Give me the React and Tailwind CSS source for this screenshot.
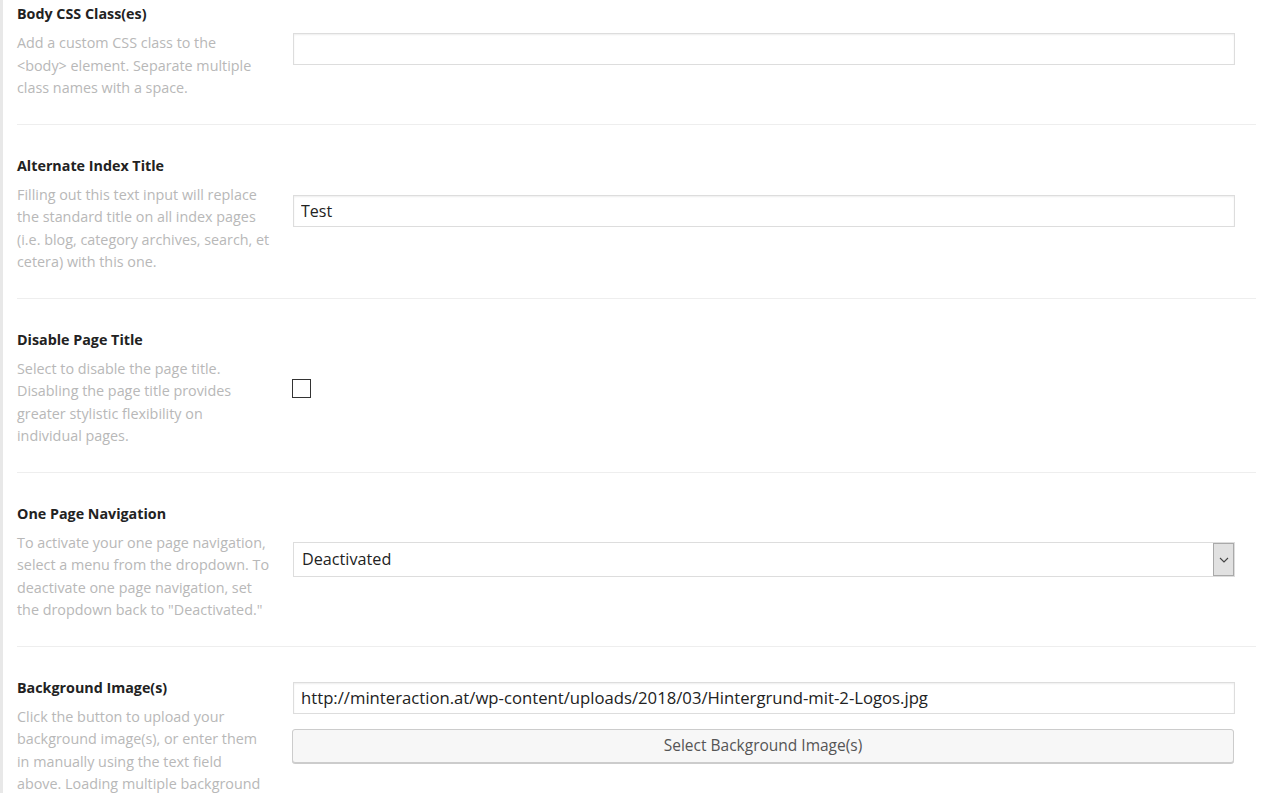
import { useState } from 'react';

const font = "font-['Open_Sans','Noto_Sans',sans-serif]";

function Row({ title, lines, first, children, top }) {
  return (
    <div className={`flex border-b border-[#eeeeee] ${first ? 'pt-[4px]' : 'pt-[31px]'} pb-[24px] ${top ? 'items-start' : 'items-center'}`}>
      <div className="w-[276px] shrink-0">
        <div className="text-[14.3px] leading-[20px] font-bold text-[#222]">{title}</div>
        <div className="mt-2 text-[14.35px] leading-[22.5px] text-[#b8b8b8]">
          {lines.map(l => (
            <div key={l} className="whitespace-nowrap">{l}</div>
          ))}
        </div>
      </div>
      <div className="flex-1 pr-[21px]">{children}</div>
    </div>
  );
}

export default function App() {
  const [css, setCss] = useState('');
  const [indexTitle, setIndexTitle] = useState('Test');
  const [disableTitle, setDisableTitle] = useState(false);
  const [nav, setNav] = useState('Deactivated');
  const [bg, setBg] = useState('http://minteraction.at/wp-content/uploads/2018/03/Hintergrund-mit-2-Logos.jpg');

  const inputCls = 'w-full h-[32px] px-[7px] border border-[#dddddd] shadow-[inset_0_1px_2px_rgba(0,0,0,0.07)] text-[#222] bg-white outline-none';

  return (
    <div className={`h-[793px] bg-white border-l-[3px] border-[#e8e8e8] pl-[14px] pr-[8px] overflow-hidden ${font}`}>
      <Row
        first
        title="Body CSS Class(es)"
        lines={['Add a custom CSS class to the', '<body> element. Separate multiple', 'class names with a space.']}
      >
        <div className="pb-[6px]">
          <input value={css} onChange={e => setCss(e.target.value)} className={`${inputCls} text-[16px]`} />
        </div>
      </Row>
      <Row
        title="Alternate Index Title"
        lines={[
          'Filling out this text input will replace',
          'the standard title on all index pages',
          '(i.e. blog, category archives, search, et',
          'cetera) with this one.',
        ]}
      >
        <div className="pb-[8px]">
          <input value={indexTitle} onChange={e => setIndexTitle(e.target.value)} className={`${inputCls} text-[16px]`} />
        </div>
      </Row>
      <Row
        title="Disable Page Title"
        lines={[
          'Select to disable the page title.',
          'Disabling the page title provides',
          'greater stylistic flexibility on',
          'individual pages.',
        ]}
      >
        <button
          onClick={() => setDisableTitle(v => !v)}
          className="block w-[19px] h-[19px] ml-[-1px] border-[1.5px] border-[#333] bg-white"
        >
          {disableTitle && <span className="block text-[12px] leading-[16px]">✓</span>}
        </button>
      </Row>
      <Row
        title="One Page Navigation"
        lines={[
          'To activate your one page navigation,',
          'select a menu from the dropdown. To',
          'deactivate one page navigation, set',
          'the dropdown back to "Deactivated."',
        ]}
      >
        <div className="pb-[6px]">
          <div className="relative h-[35px] border border-[#dddddd] bg-white flex items-center">
            <select
              value={nav}
              onChange={e => setNav(e.target.value)}
              className="appearance-none w-full h-full pl-[8px] text-[16.2px] text-[#222] bg-transparent outline-none"
            >
              <option>Deactivated</option>
            </select>
            <div className="absolute right-0 top-0 bottom-0 w-[21px] bg-[#e1e1e1] border border-[#a9a9a9] flex items-center justify-center pointer-events-none">
              <svg width="10" height="6" viewBox="0 0 10 6" fill="none" stroke="#444" strokeWidth="1.1">
                <path d="M1 1l4 4 4-4" />
              </svg>
            </div>
          </div>
        </div>
      </Row>
      <Row
        top
        title="Background Image(s)"
        lines={[
          'Click the button to upload your',
          'background image(s), or enter them',
          'in manually using the text field',
          'above. Loading multiple background',
        ]}
      >
        <div className="mt-[4px]">
          <input value={bg} onChange={e => setBg(e.target.value)} className={`${inputCls} text-[16.7px]`} />
          <button className="mt-[15px] ml-[-1px] w-full h-[34px] bg-[#f7f7f7] border border-[#cccccc] rounded-[3px] shadow-[0_1px_0_#cccccc] text-[15.5px] text-[#555]">
            Select Background Image(s)
          </button>
        </div>
      </Row>
    </div>
  );
}
